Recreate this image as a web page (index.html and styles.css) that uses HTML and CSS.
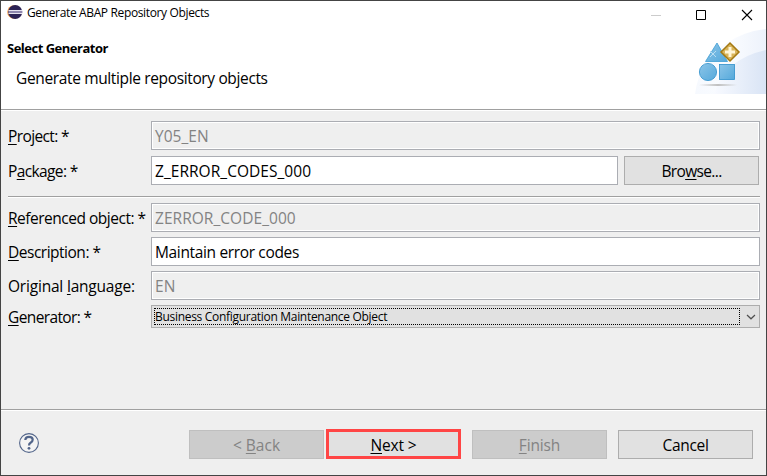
FILE: index.html
```html
<!DOCTYPE html>
<html lang="en">
<head>
<meta charset="utf-8">
<title>Generate ABAP Repository Objects</title>
<link rel="stylesheet" href="styles.css">
</head>
<body>
<div class="window">
  <header class="header">
    <div class="titlebar">
      <svg class="app-icon" width="16" height="16" viewBox="0 0 16 16">
        <circle cx="7" cy="8" r="6.800" fill="#f5a04a"/>
        <circle cx="8.200" cy="8" r="7" fill="#2c2255"/>
        <path d="M1.500 6.500H15.300M1.500 9.500H15.300" stroke="#e6e3ef"/>
        <path d="M1.500 8H15.300" stroke="#8f87ae" stroke-width="2"/>
      </svg>
      <span class="title">Generate ABAP Repository Objects</span>
      <svg class="controls" width="104" height="12" viewBox="0 0 104 12">
        <path d="M0 6.500H10" stroke="#ccc"/>
        <path d="M45.500 1.500H54.500V10.500H45.500Z" fill="none" stroke="#000"/>
        <path d="M91 1L101 11M101 1L91 11" stroke="#000" stroke-width="1.100"/>
      </svg>
    </div>
    <div class="banner">
      <div class="banner-text">
        <h1>Select Generator</h1>
        <p>Generate multiple repository objects</p>
      </div>
      <svg class="banner-art" width="72" height="65" viewBox="0 0 72 65">
        <defs>
          <linearGradient id="sky" x1="0" x2="1"><stop offset="0" stop-color="#f6f9fe"/><stop offset=".5" stop-color="#fafcff"/><stop offset="1" stop-color="#edf2fb"/></linearGradient>
          <linearGradient id="sky2" x1="0" x2="1"><stop offset="0" stop-color="#f8faff"/><stop offset="1" stop-color="#d9e4f5"/></linearGradient>
          <linearGradient id="blue" x1="0" y1="0" x2="1" y2="1"><stop offset="0" stop-color="#8cc5e8"/><stop offset="1" stop-color="#55a9db"/></linearGradient>
          <linearGradient id="shade"><stop offset="0" stop-color="#bbb" stop-opacity="0"/><stop offset=".5" stop-color="#c0c0c0"/><stop offset="1" stop-color="#bbb" stop-opacity="0"/></linearGradient>
        </defs>
        <path d="M1 65Q6 30 31 15Q50 2 72 0V65Z" fill="url(#sky)"/>
        <path d="M20 65Q32 29 72 21V65Z" fill="url(#sky2)"/>
        <rect x="5" y="55" width="38" height="2" fill="url(#shade)"/>
        <path d="M23 14L33.500 32.500H11.500Z" fill="url(#blue)" stroke="#3d9dd3" stroke-width=".8"/>
        <path d="M16 22L22 28M22 22L16 28" stroke="#b9def2"/>
        <circle cx="14" cy="43" r="8.600" fill="url(#blue)" stroke="#2f90cb" stroke-width=".8"/>
        <rect x="25.500" y="35.500" width="15" height="15" fill="url(#blue)" stroke="#2f90cb" stroke-width=".8"/>
        <path d="M36 14L45 23L36 32L27 23Z" fill="#d8b45b" stroke="#a47913" stroke-width="1.500"/>
        <path d="M36 18V28M31 23H41" stroke="#fff6d8" stroke-width="3"/>
      </svg>
    </div>
  </header>
  <main class="form">
    <div class="row"><label class="tight"><u>P</u>roject: *</label><div class="field readonly">Y05_EN</div></div>
    <div class="row package"><label class="tight">P<u>a</u>ckage: *</label><div class="field">Z_ERROR_CODES_000</div><div class="button"><span>Bro<u>w</u>se...</span></div></div>
    <div class="separator"></div>
    <div class="row"><label><u>R</u>eferenced object: *</label><div class="field readonly">ZERROR_CODE_000</div></div>
    <div class="row"><label><u>D</u>escription: *</label><div class="field prose">Maintain error codes</div></div>
    <div class="row"><label class="loose">Original <u>l</u>anguage:</label><div class="field readonly">EN</div></div>
    <div class="row generator"><label class="tight"><u>G</u>enerator: *</label>
      <div class="combo">
        <div class="focus"><span>Business Configuration Maintenance Object</span></div>
        <svg width="19" height="21" viewBox="0 0 19 21"><path d="M7 9L11 12.800L15 9" fill="none" stroke="#505050" stroke-width="1.200"/></svg>
      </div>
    </div>
  </main>
  <footer class="footer">
    <svg class="help" width="22" height="22" viewBox="0 0 22 22">
      <circle cx="11" cy="11" r="9.400" fill="#f4f4f4" stroke="#52658a" stroke-width="1.100"/>
      <path d="M7.300 8Q7.500 4.900 11 4.900Q14.700 4.900 14.700 7.800Q14.700 9.500 12.600 10.700Q11 11.600 11 13.400" fill="none" stroke="#52658a" stroke-width="2.200"/>
      <circle cx="11" cy="16.300" r="1.400" fill="#52658a"/>
    </svg>
    <div class="button disabled">&lt; <u>B</u>ack</div>
    <div class="button next"><u>N</u>ext &gt;</div>
    <div class="button disabled finish"><u>F</u>inish</div>
    <div class="button cancel">Cancel</div>
  </footer>
</div>
</body>
</html>
```
FILE: styles.css
```css
* { box-sizing: border-box; }
body {
  margin: 0;
  font-family: "Open Sans", "Noto Sans", sans-serif;
  font-size: 15.5px;
  color: #000;
}
svg { display: block; flex: none; }
u { text-decoration-thickness: 1px; text-underline-offset: 2px; text-decoration-skip-ink: none; }
.window {
  width: 767px;
  height: 476px;
  border: 1px solid #444;
  background: #efefef;
  display: flex;
  flex-direction: column;
}
.header { height: 110px; background: #fff; border-bottom: 1px solid #fff; box-shadow: inset 0 -1px #a0a0a0; }
.titlebar { height: 28px; display: flex; align-items: flex-start; padding: 3px 7px 0 6px; }
.title { margin-left: 4px; line-height: 18px; font-size: 12px; letter-spacing: -0.36px; }
.controls { margin: 5px 4px 0 auto; }
.banner { display: flex; justify-content: space-between; height: 65px; }
.banner-text { padding: 9px 0 0 6px; }
h1 { margin: 0; font-size: 13px; line-height: 21px; letter-spacing: -0.5px; }
p { margin: 8px 0 0 9px; line-height: 22px; letter-spacing: -0.36px; }
.form {
  height: 299px;
  padding: 10px 6px 0 7px;
  border-bottom: 1px solid #a0a0a0;
}
.row { display: flex; height: 29px; margin-bottom: 5px; line-height: 31px; white-space: nowrap; }
.row label { width: 143px; flex: none; letter-spacing: -0.49px; }
.row .tight { letter-spacing: -0.62px; }
.row .loose { letter-spacing: -0.2px; }
.row:first-child { margin-bottom: 6px; }
.row.package { margin-bottom: 11px; padding-right: 1px; }
.row.generator { height: 23px; line-height: 25px; }
.field { flex: 1; border: 1px solid #abadb3; background: #fff; padding-left: 3px; line-height: 29px; letter-spacing: 0.04px; }
.prose { letter-spacing: -0.35px; }
.readonly { background: #efefef; color: #838383; box-shadow: inset 0 0 0 1px #fff; }
.separator { height: 2px; border-top: 1px solid #a0a0a0; background: #fff; margin-bottom: 5px; }
.button {
  width: 135px;
  height: 29px;
  flex: none;
  border: 1px solid #adadad;
  background: #e1e1e1;
  text-align: center;
  line-height: 28px;
}
.package .button { margin-left: 6px; line-height: 29px; letter-spacing: -0.65px; }
.combo { flex: 1; display: flex; border: 1px solid #adadad; background: #e1e1e1; }
.focus { flex: 1; margin: 2px 0 2px 2px; border: 1px dotted #000; font-size: 12px; line-height: 16px; letter-spacing: -0.3px; }
.footer { flex: 1; border-top: 1px solid #fff; display: flex; align-items: flex-start; padding: 19px 0 0 17px; }
.help { margin: 2px 149px 0 0; }
.disabled { background: #ccc; border-color: #bfbfbf; color: #838383; }
.next { height: 30px; margin: -1px 11px 0 2px; border: 3px solid #ff4545; line-height: 26px; letter-spacing: -0.15px; }
.finish { letter-spacing: -0.15px; }
.cancel { margin-left: 11px; letter-spacing: -0.3px; }
```
